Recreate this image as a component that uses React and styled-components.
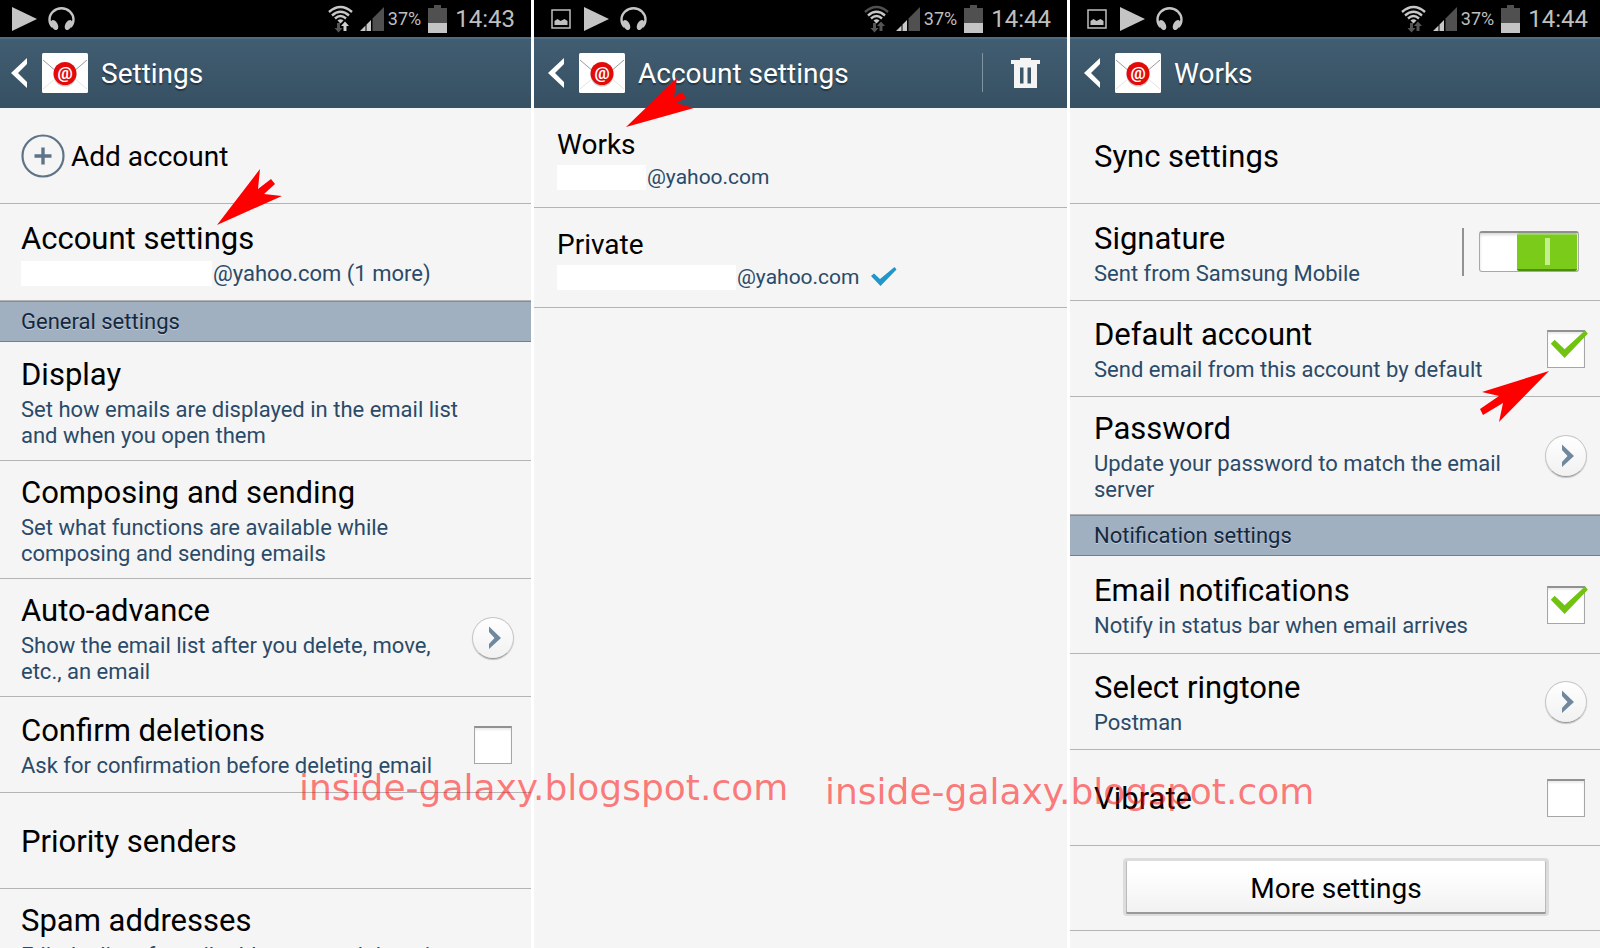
import React from 'react';
import styled, { createGlobalStyle } from 'styled-components';

const GlobalStyle = createGlobalStyle`
  * { box-sizing: border-box; }
  body { margin: 0; background: #fff; font-family: Roboto, "Liberation Sans", sans-serif; }
  h1, h2, p, ul { margin: 0; padding: 0; font-weight: 400; }
  ul { list-style: none; }
  svg { display: block; flex: none; }
`;

/* ---------- page ---------- */
const Page = styled.main`
  position: relative;
  display: grid;
  grid-template-columns: 531fr 533fr 530fr;
  gap: 3px;
  height: 100vh;
  overflow: hidden;
`;
const Screen = styled.section`
  --inset: ${(p) => p.$inset};
  --edge: ${(p) => p.$edge};
  --bar: ${(p) => p.$bar};
  min-width: 0;
  background: #f5f5f5;
  overflow: hidden;
`;

/* ---------- status bar ---------- */
const StatusBar = styled.div`
  display: flex;
  align-items: center;
  justify-content: space-between;
  height: 37px;
  padding: 0 ${(p) => p.$end} 0 12px;
  background: #000;
  color: #bfbfbf;
`;
const StatusGroup = styled.div`
  display: flex;
  align-items: center;
  gap: ${(p) => p.$gap};
`;
const PictureSlot = styled.span`
  margin: 0 2px 0 5px;
`;
const WifiSlot = styled.span`
  margin-right: 3px;
`;
const Battery = styled.span`
  font-size: 18px;
  line-height: 24px;
  margin-right: 3px;
`;
const Clock = styled.time`
  font-size: 24px;
  line-height: 36px;
  margin-left: 4px;
`;

/* ---------- app bar ---------- */
const AppBar = styled.header`
  display: flex;
  align-items: center;
  height: 71px;
  padding: 0 27px 2px var(--bar);
  border-top: 2px solid #4f6b82;
  background: linear-gradient(#415d71, #375063);
  color: #fff;
`;
const BarButton = styled.button`
  display: block;
  padding: 0;
  border: 0;
  background: none;
`;
const AppIcon = styled.span`
  margin: 0 13px 0 14px;
`;
const ScreenTitle = styled.h1`
  flex: 1;
  padding-top: 3px;
  font-size: 28px;
  line-height: 36px;
  text-shadow: 0 2px 1px rgba(0, 0, 0, 0.35);
`;
const BarDivider = styled.span`
  width: 1px;
  height: 39px;
  margin-right: 28px;
  background: #8193a1;
`;

/* ---------- rows ---------- */
const Row = styled.li`
  display: flex;
  align-items: center;
  min-height: ${(p) => p.$height || '96px'};
  padding: 0 var(--edge) 0 var(--inset);
  border-bottom: 1px solid #b4b4b4;
`;
const RowText = styled.div`
  flex: 1;
  min-width: 0;
  padding-top: ${(p) => (p.$compact ? '2px' : '3px')};
`;
const RowTitle = styled.h2`
  color: #000;
  font-size: ${(p) => (p.$compact ? '28px' : '31px')};
  line-height: 36px;
`;
const RowNote = styled.p`
  display: flex;
  align-items: center;
  max-width: 450px;
  margin-top: ${(p) => (p.$compact ? '1px' : '4px')};
  color: #2b4a68;
  font-size: ${(p) => (p.$compact ? '21px' : '22px')};
  line-height: 26px;
`;
const Redacted = styled.span`
  width: ${(p) => p.$width};
  height: 25px;
  margin-right: 1px;
  background: #fff;
`;
const SectionTitle = styled.h2`
  height: 41px;
  padding: 0 var(--inset);
  border-top: 1px solid #7f8d9c;
  border-bottom: 1px solid #6f8191;
  background: #a1b0c0;
  color: #14283f;
  font-size: 22px;
  line-height: 40px;
  text-shadow: 0 1px 0 rgba(255, 255, 255, 0.4);
`;
const AddIcon = styled.span`
  margin-right: 6px;
`;
const TickSlot = styled.span`
  margin-left: 11px;
`;

/* ---------- controls ---------- */
const GoButton = styled.button`
  flex: none;
  width: 42px;
  height: 42px;
  padding: 0;
  border: 1px solid #c4c4c4;
  border-bottom-color: #999;
  border-radius: 50%;
  background: linear-gradient(#fff, #f1f1f1);
  box-shadow: 0 1px 1px rgba(0, 0, 0, 0.2);
`;
const CheckWrap = styled.label`
  position: relative;
  display: block;
  flex: none;
  width: 38px;
  height: 38px;
  margin: 0 2px;
  svg { position: absolute; left: 0; top: 0; overflow: visible; pointer-events: none; }
`;
const CheckInput = styled.input`
  appearance: none;
  display: block;
  width: 38px;
  height: 38px;
  margin: 0;
  border: 1px solid #a6a6a6;
  border-top: 2px solid #919191;
  background: #fff;
  box-shadow: inset 0 2px 2px rgba(0, 0, 0, 0.08);
`;
const SwitchDivider = styled.span`
  width: 2px;
  height: 48px;
  margin-right: 15px;
  background: #929292;
`;
const Switch = styled.input`
  appearance: none;
  flex: none;
  width: 100px;
  height: 41px;
  margin: 0 8px 2px 0;
  padding: 0 1px;
  border: 1px solid #a8a8a8;
  border-top: 2px solid #8f8f8f;
  border-radius: 3px;
  background: #fff;
  box-shadow: inset 0 2px 3px rgba(0, 0, 0, 0.15);
  &::before {
    content: '';
    display: block;
    box-sizing: border-box;
    width: 60px;
    height: 38px;
    margin-left: auto;
    border-radius: 2px;
    border-top: 2px solid #9bd95b;
    border-bottom: 2px solid #4f8a12;
    background: linear-gradient(#c5ee91, #c5ee91) center / 5px 27px no-repeat #7acb1a;
  }
`;
const ButtonRow = styled.li`
  height: 85px;
  padding: 12px 51px 0 53px;
  border-bottom: 1px solid #b4b4b4;
`;
const MoreButton = styled.button`
  display: block;
  width: 100%;
  height: 58px;
  padding: 3px 0 0;
  border: 3px solid #dcdcdc;
  border-bottom-width: 2px;
  border-radius: 4px;
  background: linear-gradient(#fff 20%, #f1f1f1) padding-box;
  box-shadow: inset 0 -2px 0 #999, inset 1px 0 0 #bbb, inset -1px 0 0 #bbb;
  color: #000;
  font-family: inherit;
  font-size: 28px;
  line-height: 50px;
`;

/* ---------- overlays ---------- */
const Pointer = styled.svg`
  position: absolute;
  left: ${(p) => p.$x}px;
  top: ${(p) => p.$y}px;
  fill: #f00;
`;
const Watermark = styled.p`
  position: absolute;
  left: ${(p) => p.$x}px;
  top: ${(p) => p.$y}px;
  color: rgba(255, 0, 0, 0.52);
  font-family: "DejaVu Sans", sans-serif;
  font-size: 36px;
  line-height: 42px;
  white-space: nowrap;
`;

/* ---------- drawings ---------- */
const PictureIcon = () => (
  <svg width="20" height="20" viewBox="0 0 20 20" fill="none" stroke="#bfbfbf">
    <rect x="1" y="1" width="18" height="18" strokeWidth="1.5" />
    <path d="M3.5 16v-4l3-2 3 2 4-2 3 2v4z" fill="#bfbfbf" stroke="none" />
  </svg>
);
const PlayIcon = () => (
  <svg width="25" height="24" viewBox="0 0 25 24" fill="#c4c4c4"><path d="M0 0v24l25-12z" /></svg>
);
const HeadphonesIcon = () => (
  <svg width="27" height="24" viewBox="0 0 27 24" fill="#c4c4c4">
    <path d="M4.500 20C2.500 18 1.500 15.500 1.500 12.500a12 11.300 0 0 1 24 0C25.500 15.500 24.500 18 22.500 20" fill="none" stroke="#c4c4c4" strokeWidth="2.400" />
    <ellipse cx="6.500" cy="18" rx="3.200" ry="5.400" transform="rotate(-28 6.500 18)" />
    <ellipse cx="20.500" cy="18" rx="3.200" ry="5.400" transform="rotate(28 20.500 18)" />
  </svg>
);
const WifiIcon = ({ top, up }) => (
  <svg width="25" height="28" viewBox="0 0 25 28" fill="none" stroke="#c8c8c8" strokeWidth="2.4">
    <path d="M1 7Q12.500-3 24 7" stroke={top} />
    <path d="M4 10.500Q12.500 3 21 10.500M7 13.500Q12.500 8.500 18 13.500" />
    <path d="M9.500 15.500Q12.500 13 15.500 15.500L12.500 18.500z" fill="#c8c8c8" stroke="none" />
    <path d="M9 18h3v5h2.500l-4 4.500-4-4.500H9z" fill="#555" stroke="none" />
    <path d="M15.500 26v-5H13l4-4.500 4 4.500h-2.500v5z" fill={up} stroke="none" />
  </svg>
);
const SignalIcon = () => (
  <svg width="24" height="24" viewBox="0 0 24 24">
    <path d="M0 24l5.500-5.500V24zM6.500 24v-6.500L11 13v11z" fill="#c8c8c8" />
    <path d="M12.500 24V11.500L24 0v24z" fill="#505050" />
  </svg>
);
const BatteryIcon = () => (
  <svg width="19" height="28" viewBox="0 0 19 28">
    <path d="M0 3h6V0h7v3h6v15H0z" fill="#505050" />
    <path d="M0 18h19v10H0z" fill="#c4c4c4" />
  </svg>
);
const BackIcon = () => (
  <svg width="17" height="30" viewBox="0 0 17 30" fill="#fff"><path d="M16 0v6L7 15l9 9v6L0 15z" /></svg>
);
const MailIcon = () => (
  <svg width="46" height="40" viewBox="0 0 46 40">
    <rect width="46" height="40" rx="1.500" fill="#fff" />
    <path d="M1 7l14 12M45 7L31 19" stroke="#999" fill="none" />
    <path d="M1 36l13-11M45 36L32 25" stroke="#e4e4e4" fill="none" />
    <circle cx="23" cy="22" r="11.500" fill="#ccc" />
    <circle cx="23" cy="20.500" r="11.500" fill="#e30a0a" />
    <text x="23" y="25.500" fill="#fff" fontSize="17" fontWeight="700" textAnchor="middle">@</text>
  </svg>
);
const TrashIcon = () => (
  <svg width="29" height="30" viewBox="0 0 29 30" fill="#f4f4f4">
    <path fillRule="evenodd" d="M9 2V0h11v2h9v4h-3v24H3V6H0V2zM9 9.500v16h3.500v-16zM16.500 9.500v16H20v-16z" />
  </svg>
);
const PlusIcon = () => (
  <svg width="44" height="44" viewBox="0 0 44 44" fill="none" stroke="#5f7388">
    <circle cx="22" cy="22" r="20.500" strokeWidth="2.200" />
    <path d="M13.500 22h17M22 13.500v17" strokeWidth="3.400" />
  </svg>
);
const GoIcon = () => (
  <svg width="40" height="40" viewBox="0 0 40 40" fill="#70889e"><path d="M16 8.500 28 20 16 31v-5l5.500-6L16 14z" /></svg>
);
const TickIcon = () => (
  <svg width="41" height="29" viewBox="0 0 41 29"><path d="M3.800 13.700 7.600 9.700l10 9.600L38.200.3l2.600 3.400L17.600 28z" fill="#72c213" /></svg>
);
const BlueTick = () => (
  <svg width="26" height="20" viewBox="0 0 26 20"><path d="M0 9l3-2.500 6 5.500L23.500 0l2 2.500L9.500 19z" fill="#2196c9" /></svg>
);

/* ---------- composed parts ---------- */
function Status({ time, picture, end = '16px', wifiTop = '#c8c8c8', wifiUp = '#555' }) {
  return (
    <StatusBar $end={end}>
      <StatusGroup $gap="11px">
        {picture && <PictureSlot><PictureIcon /></PictureSlot>}
        <PlayIcon />
        <HeadphonesIcon />
      </StatusGroup>
      <StatusGroup $gap="4px">
        <WifiSlot><WifiIcon top={wifiTop} up={wifiUp} /></WifiSlot>
        <SignalIcon />
        <Battery>37%</Battery>
        <BatteryIcon />
        <Clock>{time}</Clock>
      </StatusGroup>
    </StatusBar>
  );
}

function Header({ title, children }) {
  return (
    <AppBar>
      <BarButton aria-label="Back"><BackIcon /></BarButton>
      <AppIcon><MailIcon /></AppIcon>
      <ScreenTitle>{title}</ScreenTitle>
      {children}
    </AppBar>
  );
}

function Setting({ icon, title, note, height, compact, children }) {
  return (
    <Row $height={height}>
      {icon}
      <RowText $compact={compact}>
        <RowTitle $compact={compact}>{title}</RowTitle>
        {note && <RowNote $compact={compact}>{note}</RowNote>}
      </RowText>
      {children}
    </Row>
  );
}

function Check({ label, checked }) {
  return (
    <CheckWrap>
      <CheckInput type="checkbox" aria-label={label} defaultChecked={checked} />
      {checked && <TickIcon />}
    </CheckWrap>
  );
}

const Go = ({ label }) => <GoButton aria-label={label}><GoIcon /></GoButton>;

export default function App() {
  return (
    <>
      <GlobalStyle />
      <Page>
        <Screen $inset="21px" $edge="17px" $bar="11px">
          <Status time="14:43" wifiUp="#d0d0d0" />
          <Header title="Settings" />
          <ul>
            <Setting compact title="Add account" icon={<AddIcon><PlusIcon /></AddIcon>} />
            <Setting title="Account settings" height="97px" note={<><Redacted $width="191px" />@yahoo.com (1 more)</>} />
          </ul>
          <SectionTitle>General settings</SectionTitle>
          <ul>
            <Setting title="Display" height="119px" note="Set how emails are displayed in the email list and when you open them" />
            <Setting title="Composing and sending" height="118px" note={<>Set what functions are available while<br />composing and sending emails</>} />
            <Setting title="Auto-advance" height="118px" note="Show the email list after you delete, move, etc., an email">
              <Go label="Auto-advance" />
            </Setting>
            <Setting title="Confirm deletions" note="Ask for confirmation before deleting email">
              <Check label="Confirm deletions" />
            </Setting>
            <Setting title="Priority senders" />
            <Setting title="Spam addresses" height="118px" note="Edit the list of email addresses and domains registered as spam" />
          </ul>
        </Screen>

        <Screen $inset="23px" $edge="13px" $bar="14px">
          <Status time="14:44" picture wifiTop="#505050" />
          <Header title="Account settings">
            <BarDivider />
            <BarButton aria-label="Delete"><TrashIcon /></BarButton>
          </Header>
          <ul>
            <Setting compact title="Works" height="100px" note={<><Redacted $width="89px" />@yahoo.com</>} />
            <Setting compact title="Private" height="100px" note={<><Redacted $width="179px" />@yahoo.com<TickSlot><BlueTick /></TickSlot></>} />
          </ul>
        </Screen>

        <Screen $inset="24px" $edge="13px" $bar="14px">
          <Status time="14:44" picture end="12px" />
          <Header title="Works" />
          <ul>
            <Setting title="Sync settings" />
            <Setting title="Signature" height="97px" note="Sent from Samsung Mobile">
              <SwitchDivider />
              <Switch type="checkbox" role="switch" aria-label="Signature" defaultChecked />
            </Setting>
            <Setting title="Default account" note="Send email from this account by default">
              <Check label="Default account" checked />
            </Setting>
            <Setting title="Password" height="118px" note="Update your password to match the email server">
              <Go label="Password" />
            </Setting>
          </ul>
          <SectionTitle>Notification settings</SectionTitle>
          <ul>
            <Setting title="Email notifications" height="98px" note="Notify in status bar when email arrives">
              <Check label="Email notifications" checked />
            </Setting>
            <Setting title="Select ringtone" note="Postman">
              <Go label="Select ringtone" />
            </Setting>
            <Setting title="Vibrate">
              <Check label="Vibrate" />
            </Setting>
            <ButtonRow><MoreButton>More settings</MoreButton></ButtonRow>
          </ul>
        </Screen>

        <Pointer $x={217} $y={169} width="66" height="57" viewBox="0 0 66 57">
          <path d="M0 56 43 0l-2 20 13-10 4 5-11 10 18 2z" />
        </Pointer>
        <Pointer $x={626} $y={78} width="68" height="50" viewBox="0 0 68 50">
          <path d="M0 49 51 0l-3 19 8-5 4 6-10 5 18 5z" />
        </Pointer>
        <Pointer $x={1480} $y={371} width="70" height="51" viewBox="0 0 70 51">
          <path d="M69 0 19 51l4-19L3 44l-3-6 19-13-17-4z" />
        </Pointer>
        <Watermark $x={299} $y={767}>inside-galaxy.blogspot.com</Watermark>
        <Watermark $x={825} $y={771}>inside-galaxy.blogspot.com</Watermark>
      </Page>
    </>
  );
}
